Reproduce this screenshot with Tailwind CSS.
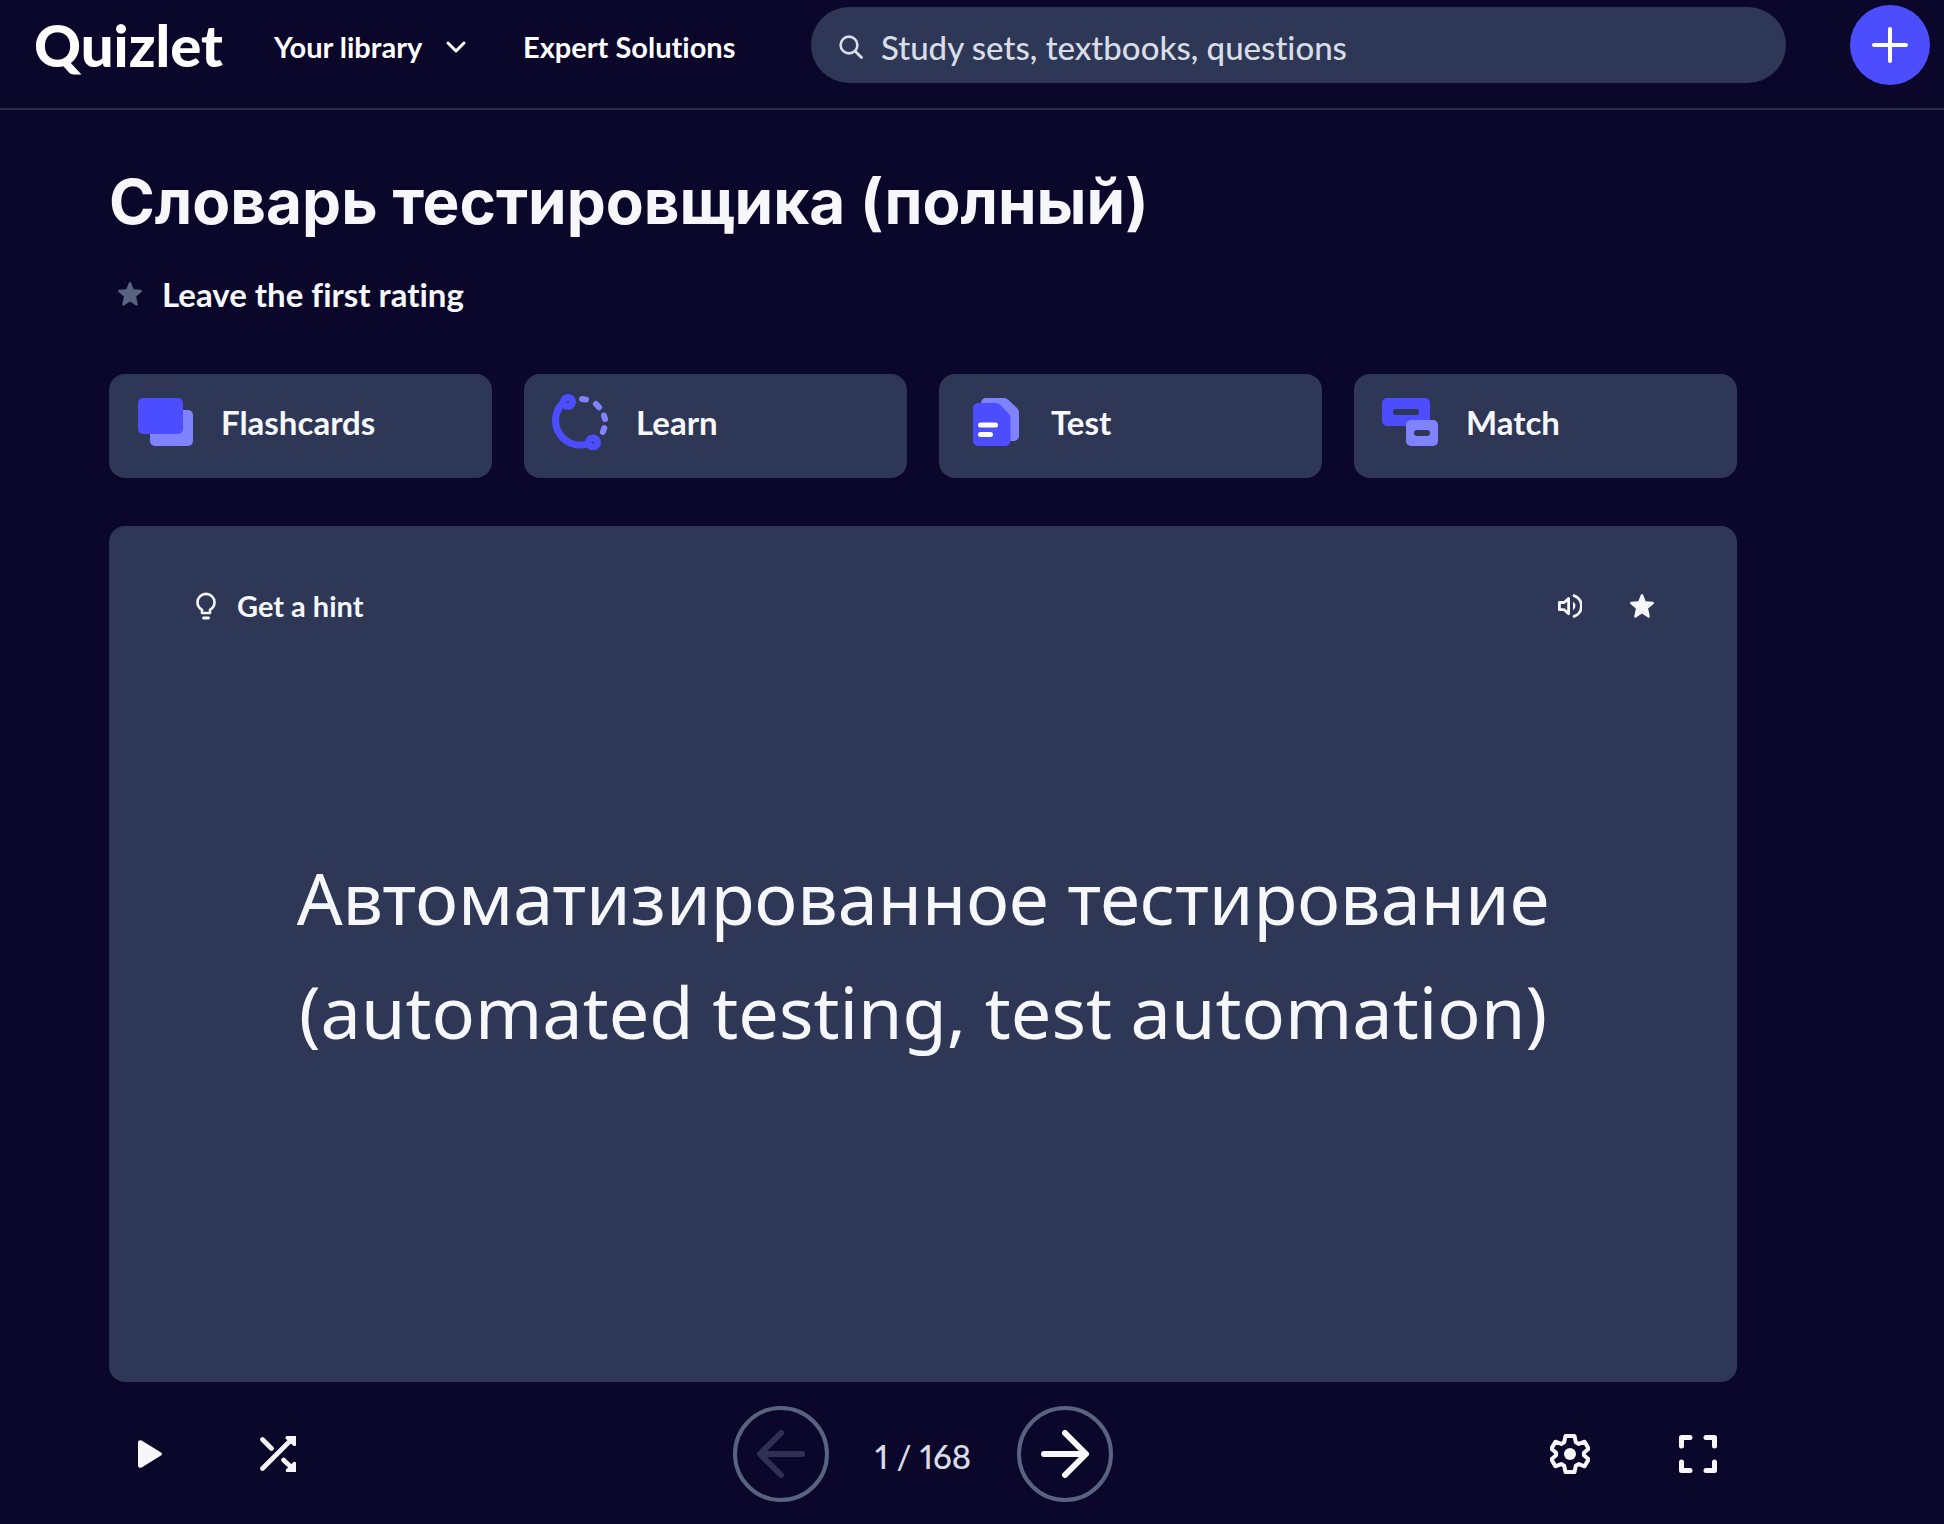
<!doctype html>
<html lang="ru">
  <head>
    <title>Словарь тестировщика (полный) | Quizlet</title>
    <meta charset="utf-8" />
    <meta name="viewport" content="width=device-width, initial-scale=1.0" />
    <script src="https://cdn.jsdelivr.net/npm/@tailwindcss/browser@4"></script>
  </head>
  <body
    class="bg-[#0b072b] min-h-screen overflow-x-hidden font-[Lato,sans-serif] text-[#f6f7fb] [font-variant-ligatures:none]"
  >
    <!-- Header -->
    <header
      class="flex items-center w-full pt-[5px] pb-[23px] pl-[34px] pr-3.5 border-b-2 border-[#2b2a40]"
    >
      <a
        href="#"
        class="w-60 shrink-0 text-[58px] leading-[72px] font-black text-white"
        >Quizlet</a
      >
      <nav class="flex items-center shrink-0 pt-1 text-[29px] leading-9 font-bold text-white">
        <button class="flex items-center gap-6 w-[249px]">
          Your library
          <svg class="w-5 h-3" viewBox="0 0 20 12" fill="none">
            <path
              d="M2 2l8 8 8-8"
              stroke="currentColor"
              stroke-width="3"
              stroke-linecap="round"
              stroke-linejoin="round"
            />
          </svg>
        </button>
        <a href="#" class="w-[288px]">Expert Solutions</a>
      </nav>
      <label
        class="flex flex-1 items-center gap-[18px] h-[76px] pt-1 px-7 rounded-full bg-[#2e3856] text-[#d9dde8]"
      >
        <svg class="w-6 h-6 shrink-0" viewBox="0 0 24 24" fill="none">
          <circle cx="10" cy="10" r="8.4" stroke="currentColor" stroke-width="2.6" />
          <path
            d="M16.2 16.2l6.3 6.3"
            stroke="currentColor"
            stroke-width="2.8"
            stroke-linecap="round"
          />
        </svg>
        <input
          type="text"
          aria-label="Search"
          placeholder="Study sets, textbooks, questions"
          class="w-full bg-transparent text-[33px] leading-10 font-medium outline-none placeholder:text-[#d9dde8]"
        />
      </label>
      <button
        aria-label="Create"
        class="flex items-center justify-center w-20 h-20 ml-16 shrink-0 rounded-full bg-[#4b4dff] text-white"
      >
        <svg class="w-9 h-9" viewBox="0 0 36 36" fill="none">
          <path
            d="M18 2v32M2 18h32"
            stroke="currentColor"
            stroke-width="4"
            stroke-linecap="round"
          />
        </svg>
      </button>
    </header>

    <main class="pl-[109px] pr-[207px]">
      <h1 class="pt-[52px] text-[62px] leading-[80px] font-bold font-[Inter,sans-serif]">
        Словарь тестировщика (полный)
      </h1>
      <button class="flex items-center gap-5 mt-8 pl-[9px] text-[33px] leading-10 font-bold">
        <svg class="w-6 h-6 text-[#586380]" viewBox="0 0 24 24" fill="currentColor">
          <path
            d="M10.900.8c.4-1 1.800-1 2.200 0l2.600 6.500 7.100.5c1.100.1 1.500 1.400.7 2.100l-5.400 4.600 1.700 7.700c.3 1.100-.9 1.900-1.800 1.300L12 19.600l-6 3.900c-.9.600-2.100-.2-1.800-1.300l1.700-7.700L.5 9.900c-.8-.7-.4-2 .7-2.100l7.100-.5z"
          />
        </svg>
        Leave the first rating
      </button>

      <!-- Study modes -->
      <div class="grid grid-cols-4 gap-8 mt-[60px] text-[33px] leading-10 font-bold">
        <a href="#" class="flex items-center gap-7 pl-7 pt-5 pb-7 rounded-2xl bg-[#2e3856]">
          <svg class="w-14 h-14" viewBox="0 0 56 56">
            <rect x="13" y="16" width="43" height="36" rx="5" fill="#8083ff" />
            <rect x="1" y="4" width="45" height="36" rx="5" fill="#4b4dff" />
          </svg>
          Flashcards
        </a>
        <a href="#" class="flex items-center gap-7 pl-7 pt-5 pb-7 rounded-2xl bg-[#2e3856]">
          <svg class="w-14 h-14" viewBox="0 0 56 56" fill="none">
            <g stroke="#4b4dff">
              <path d="M12 8A24.500 24.500 0 0 0 35 50" stroke-width="7" />
              <circle cx="16" cy="8" r="4.500" stroke-width="7" />
              <circle cx="41" cy="48.500" r="4.500" stroke-width="7" />
            </g>
            <path
              d="M30 5l4 .6M44 10l3 3.200M52 21.500l1 3.500M52.300 34l-1.500 4"
              stroke="#8083ff"
              stroke-width="6"
              stroke-linecap="round"
            />
          </svg>
          Learn
        </a>
        <a href="#" class="flex items-center gap-7 pl-7 pt-5 pb-7 rounded-2xl bg-[#2e3856]">
          <svg class="w-14 h-14" viewBox="0 0 56 56">
            <path
              d="M19 4h18q2.500 0 4 1.500l9.500 9Q52 16 52 18.500V42a5 5 0 0 1-5 5H19a5 5 0 0 1-5-5V9a5 5 0 0 1 5-5z"
              fill="#8083ff"
            />
            <path
              d="M11 9h18q2.500 0 4 1.500l9 9.500q1.500 1.500 1.500 4v23a5 5 0 0 1-5 5H11a5 5 0 0 1-5-5V14a5 5 0 0 1 5-5z"
              fill="#4b4dff"
            />
            <path
              d="M13.500 31h15M13.500 40.500h10"
              stroke="#fff"
              stroke-width="5"
              stroke-linecap="round"
            />
          </svg>
          Test
        </a>
        <a href="#" class="flex items-center gap-7 pl-7 pt-5 pb-7 rounded-2xl bg-[#2e3856]">
          <svg class="w-14 h-14" viewBox="0 0 56 56">
            <rect x="0" y="4" width="48" height="28" rx="5" fill="#4b4dff" />
            <rect x="11" y="15" width="26" height="6" rx="3" fill="#2e3856" />
            <rect x="24" y="26" width="32" height="26" rx="5" fill="#8083ff" />
            <rect x="32" y="36" width="16" height="6" rx="3" fill="#2e3856" />
          </svg>
          Match
        </a>
      </div>

      <!-- Card -->
      <section class="flex flex-col h-[856px] mt-12 rounded-2xl bg-[#2e3856]">
        <div class="flex items-center h-40 pl-[85px] pr-[83px]">
          <button class="flex items-center gap-[19px] text-[29px] leading-9 font-bold">
            <svg class="w-6 h-7" viewBox="0 0 24 28" fill="none" stroke="currentColor">
              <path
                d="M8 21v-3.200C5 15.900 3.500 13.500 3.500 10.400a8.500 8.500 0 0 1 17 0c0 3.100-1.500 5.500-4.500 7.400V21z"
                stroke-width="2.600"
                stroke-linejoin="round"
              />
              <path d="M9.500 26h5" stroke-width="2.800" stroke-linecap="round" />
            </svg>
            Get a hint
          </button>
          <button aria-label="Play audio" class="ml-auto">
            <svg class="w-6 h-6" viewBox="0 0 24 24" fill="none" stroke="currentColor">
              <path
                d="M1.400 8.500h4.800L10.600 4.400v15.400L6.200 15.700H1.400z"
                stroke-width="2.800"
                stroke-linejoin="round"
              />
              <path d="M15 7.500q2.400 1.800 2.400 4.500T15 16.500z" fill="currentColor" stroke="none" />
              <path
                d="M16 1.600a11 11 0 0 1 0 20.800"
                stroke-width="2.800"
                stroke-linecap="round"
              />
            </svg>
          </button>
          <button aria-label="Star" class="ml-12">
            <svg class="w-6 h-6" viewBox="0 0 24 24" fill="currentColor">
              <path
                d="M10.900.8c.4-1 1.800-1 2.200 0l2.600 6.500 7.100.5c1.100.1 1.500 1.400.7 2.100l-5.400 4.600 1.700 7.700c.3 1.100-.9 1.900-1.800 1.300L12 19.600l-6 3.900c-.9.600-2.100-.2-1.800-1.300l1.700-7.700L.5 9.900c-.8-.7-.4-2 .7-2.100l7.100-.5z"
              />
            </svg>
          </button>
        </div>
        <p
          class="flex-1 content-center pb-40 text-center text-[72px] leading-[114px] font-['Noto_Sans',sans-serif]"
        >
          Автоматизированное тестирование<br />(automated testing, test automation)
        </p>
      </section>

      <!-- Controls -->
      <div class="grid grid-cols-3 items-center mt-6">
        <div class="flex items-center gap-[98px] pl-[29px]">
          <button aria-label="Play">
            <svg class="w-6 h-7" viewBox="0 0 24 28" fill="currentColor">
              <path
                d="M0 2.200C0 .4 2 -.4 3.600.5l19 11.800c1.900 1.200 1.900 2.200 0 3.400l-19 11.800C2 28.400 0 27.600 0 25.800z"
              />
            </svg>
          </button>
          <button aria-label="Shuffle">
            <svg class="w-9 h-9" viewBox="0 0 36 36" fill="none" stroke="currentColor">
              <path
                d="M2.500 3.500l9 9M2.500 32.500L30 5M23.500 24L31 31"
                stroke-width="4.600"
                stroke-linecap="round"
              />
              <path
                d="M26.500 0H36v9.500q-1.500 1-3 0L25.500 2.500q-.5-1.500 1-2.500zM36 26.500V36h-9.500q-1.500-1-.5-2.500l7.500-7.500q1.500-.5 2.500.5z"
                fill="currentColor"
                stroke="none"
              />
            </svg>
          </button>
        </div>
        <div class="flex items-center justify-center">
          <button
            disabled
            aria-label="Previous"
            class="flex items-center justify-center w-24 h-24 rounded-full border-4 border-[#586380] text-[#2f3054]"
          >
            <svg class="w-12 h-12" viewBox="0 0 48 48" fill="none">
              <path
                d="M45 24H4M24 3L3 24l21 21"
                stroke="currentColor"
                stroke-width="6"
                stroke-linecap="round"
                stroke-linejoin="round"
              />
            </svg>
          </button>
          <span
            class="w-[188px] pt-1 text-center text-[33px] leading-10 font-medium proportional-nums text-[#d9dde8]"
            >1 / 168</span
          >
          <button
            aria-label="Next"
            class="flex items-center justify-center w-24 h-24 rounded-full border-4 border-[#586380]"
          >
            <svg class="w-12 h-12" viewBox="0 0 48 48" fill="none">
              <path
                d="M3 24h41M24 3l21 21-21 21"
                stroke="currentColor"
                stroke-width="6"
                stroke-linecap="round"
                stroke-linejoin="round"
              />
            </svg>
          </button>
        </div>
        <div class="flex items-center justify-end gap-[88px] pr-[19px]">
          <button aria-label="Settings">
            <svg class="w-10 h-10" viewBox="0 0 40 40" fill="none">
              <path
                d="M15.500 2h9l1.300 6.200 3 1.700 5.800-2.200 4 7-4.700 4v2.600l4.700 4-4 7-5.800-2.200-3 1.700L24.500 38h-9l-1.300-6.200-3-1.700-5.800 2.200-4-7 4.700-4v-2.600l-4.700-4 4-7 5.800 2.200 3-1.700z"
                stroke="currentColor"
                stroke-width="4"
                stroke-linejoin="round"
              />
              <circle cx="20" cy="20" r="6" fill="currentColor" />
            </svg>
          </button>
          <button aria-label="Fullscreen">
            <svg class="w-10 h-10" viewBox="0 0 40 40" fill="none">
              <path
                d="M3.500 12V3.500H12M28 3.500h8.500V12M36.500 28v8.500H28M12 36.500H3.500V28"
                stroke="currentColor"
                stroke-width="5"
                stroke-linecap="round"
                stroke-linejoin="round"
              />
            </svg>
          </button>
        </div>
      </div>
    </main>
  </body>
</html>
